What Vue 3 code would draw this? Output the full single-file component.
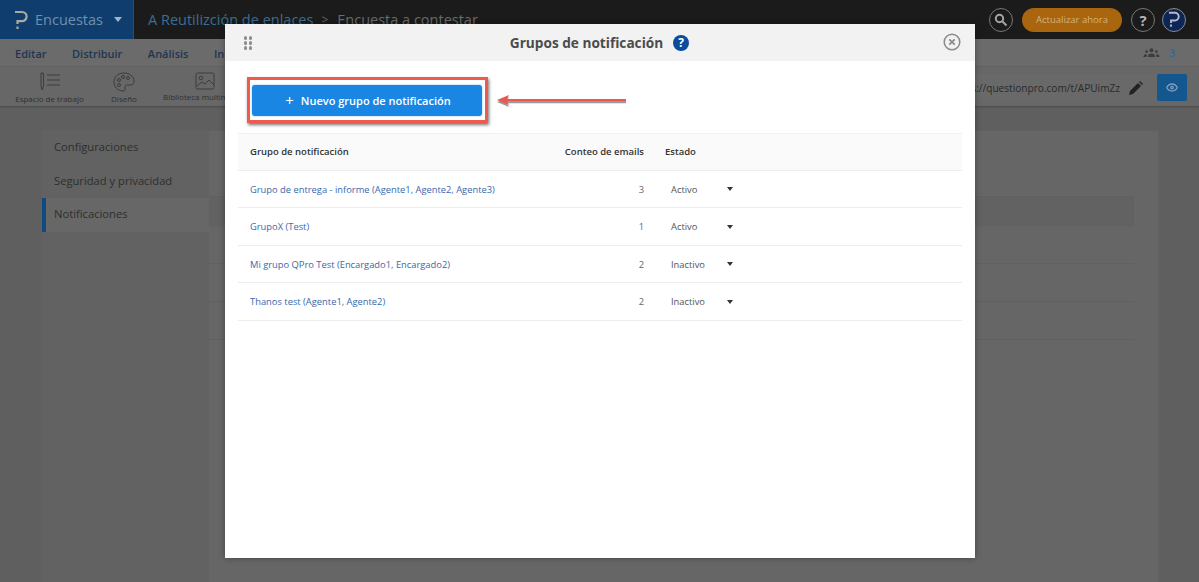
<script setup>
const tabs = ['Editar', 'Distribuir', 'Análisis', 'Integraciones']
const rows = [
  { name: 'Grupo de entrega - informe (Agente1, Agente2, Agente3)', count: 3, state: 'Activo' },
  { name: 'GrupoX (Test)', count: 1, state: 'Activo' },
  { name: 'Mi grupo QPro Test (Encargado1, Encargado2)', count: 2, state: 'Inactivo' },
  { name: 'Thanos test (Agente1, Agente2)', count: 2, state: 'Inactivo' }
]
const side = ['Configuraciones', 'Seguridad y privacidad', 'Notificaciones']
</script>

<template>
  <div class="page">
    <header class="topbar">
      <div class="brand">
        <svg class="logo" width="14" height="20" viewBox="0 0 14 20" fill="none" stroke="#a9a9a0" stroke-width="2.2"><path d="M1 2h7a4.6 4.6 0 0 1 0 9.2H3.500V14" /><path d="M3.500 16.500v2.500" /></svg>
        <span class="brand-name">Encuestas</span>
        <i class="caret brand-caret"></i>
      </div>
      <div class="crumbs">
        <span class="crumb-link">A Reutilizción de enlaces</span>
        <span class="crumb-sep">&gt;</span>
        <span class="crumb-now">Encuesta a contestar</span>
      </div>
      <div class="top-actions">
        <span class="ring">
          <svg width="14" height="14" viewBox="0 0 14 14" fill="none" stroke="#a5a5a5" stroke-width="2"><circle cx="5.500" cy="5.500" r="3.700" /><path d="M8.500 8.500l4 4" /></svg>
        </span>
        <span class="upgrade">Actualizar ahora</span>
        <span class="ring qm">?</span>
        <span class="ring user">
          <svg width="14" height="20" viewBox="0 0 14 20" fill="none" stroke="#b9b9c4" stroke-width="2.200"><path d="M1 2h7a4.600 4.600 0 0 1 0 9.200H3.500V14" /><path d="M3.500 16v2.500" /></svg>
        </span>
      </div>
    </header>

    <nav class="tabs">
      <span v-for="(t, i) in tabs" :key="t" class="tab" :class="{ on: i === 0 }">{{ t }}</span>
      <span class="users">
        <svg width="17" height="9" viewBox="0 0 18 10" fill="#3d3d3d"><circle cx="9" cy="2.500" r="2.200" /><circle cx="3.500" cy="4" r="1.500" /><circle cx="14.500" cy="4" r="1.500" /><path d="M5 10c0-3 1.500-4 4-4s4 1 4 4zM0 10c0-2 1-3 3-3l1 .5L3.500 10zM18 10c0-2-1-3-3-3l-1 .5.5 2.500z" /></svg>
        <b>3</b>
      </span>
    </nav>

    <section class="tools">
      <div class="tool t1">
        <svg width="22" height="20" viewBox="0 0 22 20" fill="none" stroke="#3c3c3c" stroke-width="1"><path d="M2 1h2.500v13L3.200 18 2 14z" /><path d="M8 3h13M8 8h13M8 13h13" /></svg>
        <span>Espacio de trabajo</span>
      </div>
      <div class="tool t2">
        <svg width="22" height="20" viewBox="0 0 22 20" fill="none" stroke="#3c3c3c" stroke-width="1"><path d="M11 1C5 1 1 5 1 10s4 9 9 9c2 0 2.500-1.500 2-3-.5-2 .5-3 2.500-3H18c2 0 3-1.500 3-4 0-4.500-4.500-8-10-8z" /><circle cx="6" cy="8" r="1.500" /><circle cx="10" cy="5" r="1.500" /><circle cx="15" cy="6" r="1.500" /><circle cx="6" cy="13" r="1.500" /></svg>
        <span>Diseño</span>
      </div>
      <div class="tool t3">
        <svg width="20" height="18" viewBox="0 0 20 18" fill="none" stroke="#3c3c3c" stroke-width="1"><rect x="1" y="1" width="18" height="16" rx="1.500" /><circle cx="6" cy="6" r="1.800" /><path d="M2 14l5-4 3 2 4-4 5 5" /></svg>
        <span>Biblioteca multimedia</span>
      </div>
      <div class="url-box">
        <span class="url">https://questionpro.com/t/APUimZz</span>
        <svg class="pencil" width="14" height="14" viewBox="0 0 14 14" fill="#222"><path d="M0 14l1-4 8-8 3 3-8 8zM10 1l1-1 3 3-1 1z" /></svg>
      </div>
      <span class="eye">
        <svg width="12" height="9" viewBox="0 0 12 9" fill="none" stroke="#7f9fbf" stroke-width="1.300"><path d="M.7 4.500C2 2 4 1 6 1s4 1 5.300 3.500C10 7 8 8 6 8S2 7 .7 4.500z" /><circle cx="6" cy="4.500" r="1.200" /></svg>
      </span>
    </section>

    <main class="content">
      <div class="card">
        <aside class="sidebar">
          <div v-for="(s, i) in side" :key="s" class="side-item" :class="{ active: i === 2 }">{{ s }}</div>
        </aside>
        <div class="lines">
          <div class="line-head"></div>
          <div class="line"></div>
          <div class="line"></div>
          <div class="line"></div>
        </div>
      </div>
    </main>

    <div class="modal">
      <div class="modal-head">
        <span class="dots"><i v-for="n in 6" :key="n"></i></span>
        <div class="modal-title">
          <h2>Grupos de notificación</h2>
          <span class="help">?</span>
        </div>
        <svg class="close" width="18" height="18" viewBox="0 0 18 18" fill="none" stroke="#8a8a8a"><circle cx="9" cy="9" r="7.800" stroke-width="1.500" /><path d="M6.300 6.300l5.400 5.400M11.700 6.300l-5.400 5.400" stroke-width="1.700" /></svg>
      </div>
      <div class="modal-body">
        <div class="cta-row">
          <div class="highlight">
            <button class="cta"><span class="plus">+</span>Nuevo grupo de notificación</button>
          </div>
          <svg class="arrow" width="132" height="16" viewBox="0 0 132 16">
            <path d="M1 8.500 13 3.500 11 7.300H130V9.700H11L13 13.500z" fill="#9a9a9a" transform="translate(0 1.500)" />
            <path d="M1 8 13 3 11 6.900H130V9.100H11L13 13z" fill="#e8594f" />
          </svg>
        </div>
        <div class="table">
          <div class="row head">
            <span class="c-name">Grupo de notificación</span>
            <span class="c-count">Conteo de emails</span>
            <span class="c-state">Estado</span>
          </div>
          <div v-for="r in rows" :key="r.name" class="row item">
            <span class="c-name link">{{ r.name }}</span>
            <span class="c-count num">{{ r.count }}</span>
            <span class="c-state val">{{ r.state }}</span>
            <i class="caret row-caret"></i>
          </div>
        </div>
      </div>
    </div>
  </div>
</template>

<style scoped>
.page {
  position: relative;
  width: 1199px;
  height: 582px;
  overflow: hidden;
  background: #5f5f5f;
  font-family: "Open Sans", "Noto Sans", sans-serif;
  display: flex;
  flex-direction: column;
}
.topbar {
  height: 39px;
  background: #1b1b1b;
  display: flex;
  align-items: center;
  flex: none;
}
.brand {
  width: 134px;
  height: 39px;
  background: #0f3e6e;
  display: flex;
  align-items: center;
  padding-left: 14px;
  box-sizing: border-box;
  border-right: 1px solid #2b4d70;
}
.brand-name {
  margin-left: 7px;
  font-size: 14.500px;
  color: #6f90ad;
}
.caret {
  display: block;
  width: 0;
  height: 0;
  border-left: 4px solid transparent;
  border-right: 4px solid transparent;
  border-top: 4px solid #222;
}
.brand-caret {
  margin-left: 11px;
  border-left-width: 4.500px;
  border-right-width: 4.500px;
  border-top: 5px solid #a6b4c2;
}
.crumbs {
  margin-left: 14px;
  display: flex;
  align-items: center;
  font-size: 14.500px;
}
.crumb-link { color: #3b6e94; }
.crumb-sep { margin: 0 9px 0 8px; color: #666; font-size: 12px; }
.crumb-now { color: #6c6c6c; }
.top-actions {
  margin-left: auto;
  margin-right: 13px;
  display: flex;
  align-items: center;
}
.ring {
  width: 24px;
  height: 24px;
  border: 1px solid #777;
  border-radius: 50%;
  box-sizing: border-box;
  display: flex;
  align-items: center;
  justify-content: center;
}
.upgrade {
  width: 100px;
  height: 24px;
  margin: 0 9px;
  border-radius: 12px;
  background: #a9660f;
  color: #d8b27a;
  font-size: 9.500px;
  display: flex;
  align-items: center;
  justify-content: center;
}
.qm {
  color: #b5b5b5;
  font-weight: 700;
  font-size: 15px;
}
.user {
  margin-left: 7px;
  background: #0d2657;
  border-color: #8a8a8a;
}
.user svg { width: 12px; height: 17px; }
.tabs {
  height: 28px;
  flex: none;
  background: #6b6b6b;
  display: flex;
  align-items: center;
  padding-left: 15px;
  box-sizing: border-box;
  border-bottom: 1px solid #636363;
}
.tab {
  margin-right: 25.500px;
  font-size: 11px;
  font-weight: 600;
  color: #1f3552;
  line-height: 15px;
  padding-top: 2px;
  border-bottom: 1.500px solid transparent;
}
.tab.on { border-bottom-color: #2c7aa5; }
.users {
  margin-left: auto;
  margin-right: 24px;
  display: flex;
  align-items: center;
  gap: 9px;
  font-size: 10px;
}
.users b { color: #2a6aa0; font-weight: 600; }
.tools {
  height: 39px;
  flex: none;
  background: #676767;
  display: flex;
  align-items: flex-start;
  position: relative;
  box-shadow: 0 1px 2px rgba(0, 0, 0, .25);
  padding-left: 15px;
  box-sizing: border-box;
}
.tool {
  display: flex;
  flex-direction: column;
  align-items: center;
  gap: 1px;
  padding-top: 5px;
  font-size: 8px;
  color: #303030;
  white-space: nowrap;
}
.t1 { width: 69px; }
.t2 { width: 26px; margin-left: 27px; }
.t3 { width: 84px; margin-left: 26px; align-items: flex-start; }
.t3 svg { margin-left: 32px; }
.url-box {
  margin-left: auto;
  margin-top: 7px;
  height: 27px;
  display: flex;
  align-items: center;
  gap: 9px;
  padding-right: 14px;
  background: #696969;
}
.url { font-size: 10.100px; color: #2a2a2a; }
.eye {
  width: 30px;
  height: 27px;
  margin-top: 7px;
  margin-right: 12px;
  background: #14578f;
  border-radius: 2px;
  display: flex;
  align-items: center;
  justify-content: center;
}
.content {
  flex: 1;
  padding: 25px 41px 0 42px;
  min-height: 0;
}
.card {
  height: 100%;
  background: #666;
  display: flex;
  outline: 1px solid #616161;
}
.sidebar {
  width: 167px;
  background: #626262;
  flex: none;
}
.side-item {
  height: 33.500px;
  padding-left: 12px;
  padding-bottom: 2px;
  display: flex;
  align-items: center;
  font-size: 11.200px;
  color: #2e2e2e;
  box-sizing: border-box;
}
.side-item.active {
  background: #676767;
  border-left: 4px solid #0f4a80;
  padding-left: 8px;
}
.lines {
  flex: 1;
  margin: 65px 24px 0 0;
}
.line-head {
  height: 30px;
  background: #626262;
  border-top: 1px solid #606060;
  border-bottom: 1px solid #606060;
  box-sizing: border-box;
}
.line {
  height: 37px;
  border-bottom: 1px solid #606060;
}
.modal {
  position: absolute;
  left: 225px;
  top: 24px;
  width: 750px;
  height: 534px;
  background: #fff;
  box-shadow: 0 0 6px rgba(0, 0, 0, .35);
  display: flex;
  flex-direction: column;
}
.modal-head {
  height: 37px;
  flex: none;
  background: #f2f2f2;
  display: flex;
  align-items: center;
  justify-content: center;
  position: relative;
}
.dots {
  position: absolute;
  left: 18.500px;
  top: 12px;
  display: grid;
  grid-template-columns: 3.500px 3.500px;
  gap: 1.500px;
}
.dots i {
  width: 3.500px;
  height: 3.500px;
  border-radius: 50%;
  background: #8d8d8d;
}
.modal-title {
  display: flex;
  align-items: center;
  gap: 10px;
  margin-left: -1px;
}
h2 {
  margin: 0;
  font-size: 13.650px;
  font-weight: 700;
  color: #4b4b4b;
}
.help {
  width: 16px;
  height: 16px;
  border-radius: 50%;
  background: #0b4c9c;
  color: #fff;
  font-size: 12px;
  font-weight: 700;
  display: flex;
  align-items: center;
  justify-content: center;
}
.close {
  position: absolute;
  left: 718px;
  top: 9px;
}
.modal-body {
  padding: 0 13px;
  flex: 1;
}
.cta-row {
  height: 72px;
  display: flex;
  align-items: center;
  padding-left: 9px;
  padding-top: 6px;
  box-sizing: border-box;
}
.highlight {
  width: 241px;
  height: 46px;
  box-sizing: border-box;
  border: 3px solid #ef5a4f;
  box-shadow: 1px 2px 3px rgba(0, 0, 0, .55);
  display: flex;
  align-items: center;
  padding-left: 2px;
  background: #fff;
}
.cta {
  width: 230px;
  height: 31px;
  border: 0;
  border-radius: 3px;
  background: #1a86e4;
  color: #fff;
  font-family: inherit;
  font-size: 11px;
  font-weight: 600;
  display: flex;
  align-items: center;
  justify-content: center;
  box-shadow: 0 0 2px rgba(26, 134, 228, .6);
  padding-left: 8px;
}
.plus {
  font-size: 15px;
  font-weight: 400;
  margin-right: 7px;
  line-height: 1;
}
.arrow {
  margin-left: 8px;
  margin-top: -1px;
}
.table { margin-top: 0; }
.row {
  height: 37.500px;
  display: flex;
  align-items: center;
  border-bottom: 1px solid #ededed;
  box-sizing: border-box;
  padding-left: 12px;
  font-size: 9.500px;
}
.row.item {
  font-size: 9.350px;
  padding-top: 1px;
}
.row.head {
  background: #fafafa;
  border-top: 1px solid #f1f1f1;
  font-weight: 600;
  color: #333;
}
.c-name { width: 314px; flex: none; }
.c-count { width: 80px; flex: none; text-align: right; white-space: nowrap; }
.c-state { margin-left: 21px; }
.link { color: #3a68ad; }
.num { color: #666; }
.val { margin-left: 27px; width: 56px; color: #555; }
.row-caret { border-top-color: #333; border-left-width: 3.500px; border-right-width: 3.500px; }
</style>
